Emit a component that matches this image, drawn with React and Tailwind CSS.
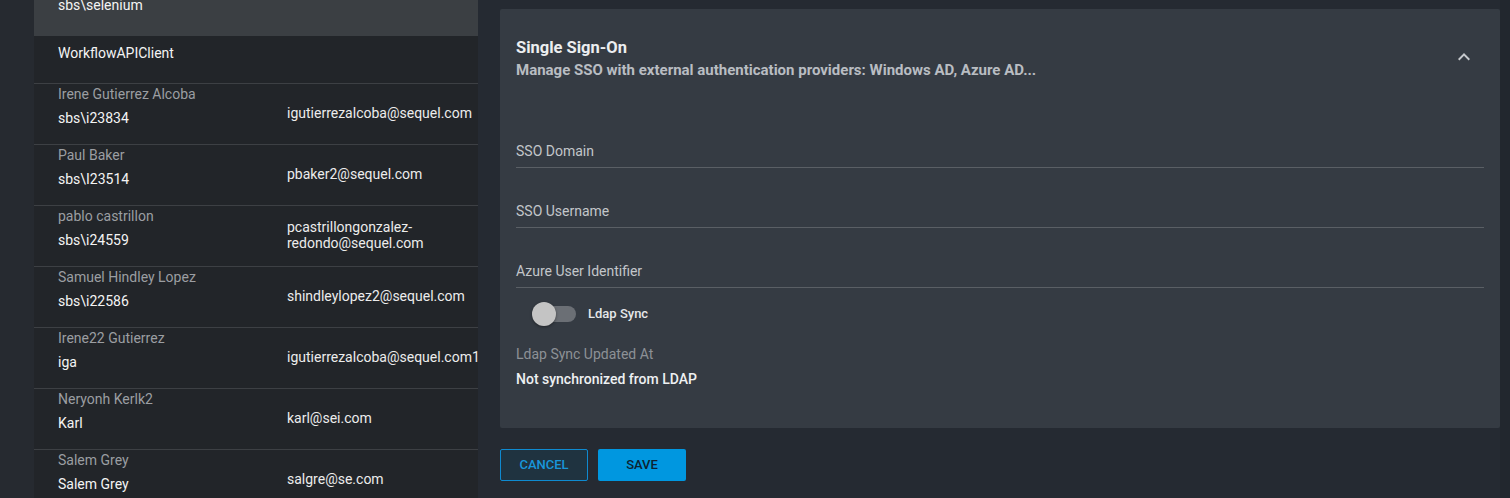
import React from "react";

const rows = [
  { name: "Irene Gutierrez Alcoba", login: "sbs\\i23834", email: "igutierrezalcoba@sequel.com" },
  { name: "Paul Baker", login: "sbs\\I23514", email: "pbaker2@sequel.com" },
  { name: "pablo castrillon", login: "sbs\\i24559", email: "pcastrillongonzalez-redondo@sequel.com" },
  { name: "Samuel Hindley Lopez", login: "sbs\\i22586", email: "shindleylopez2@sequel.com" },
  { name: "Irene22 Gutierrez", login: "iga", email: "igutierrezalcoba@sequel.com1" },
  { name: "Neryonh Kerlk2", login: "Karl", email: "karl@sei.com" },
  { name: "Salem Grey", login: "Salem Grey", email: "salgre@se.com" },
];

function Field({ label, first }) {
  return (
    <div className={`${first ? "mt-[61px]" : "mt-[33px]"} border-b border-[#5a5f65] pb-[6px]`}>
      <div className="text-[14px] leading-5 text-[#c3c6ca]">{label}</div>
    </div>
  );
}

export default function App() {
  return (
    <div
      className="flex h-[498px] w-[1510px] overflow-hidden bg-[#262a30]"
      style={{ fontFamily: "Roboto, 'Noto Sans', sans-serif" }}
    >
      {/* left table */}
      <div className="ml-[34px] w-[444px] shrink-0 overflow-hidden bg-[#222529]">
        <div className="h-[36px] overflow-hidden bg-[#3b3f43] pl-6">
          <div className="-mt-[5px] text-[14px] leading-5 text-[#f4f4f4]">sbs\selenium</div>
        </div>
        <div className="h-[48px] border-b border-[#3d4044] pl-6 pt-[7px]">
          <div className="text-[14px] leading-5 text-[#f4f4f4]">WorkflowAPIClient</div>
        </div>
        {rows.map((r) => (
          <div key={r.name} className="grid h-[61px] grid-cols-[229px_1fr] border-b border-[#3d4044] pl-6">
            <div>
              <div className="whitespace-nowrap text-[14px] leading-5 text-[#9b9ea2]">{r.name}</div>
              <div className="mt-1 whitespace-nowrap text-[14px] leading-5 text-[#f4f4f4]">{r.login}</div>
            </div>
            <div className="flex items-center pb-[2px]">
              <div className="w-[191px] text-[14px] leading-4 text-[#ececec]">{r.email}</div>
            </div>
          </div>
        ))}
      </div>

      {/* right panel */}
      <div className="flex flex-1 bg-[#252a32]">
        <div className="flex flex-1 flex-col pl-[22px] pt-[9px]">
          <div className="relative rounded-[2px] bg-[#353b43] px-4 pb-[39px] pt-[27px]">
            <div className="text-[16.5px] font-bold leading-6 text-[#eceef0]">Single Sign-On</div>
            <div className="text-[15px] font-bold leading-5 text-[#b9bdc2]">
              Manage SSO with external authentication providers: Windows AD, Azure AD...
            </div>
            <svg
              className="absolute right-[24px] top-[36px] h-6 w-6"
              viewBox="0 0 24 24"
              fill="#c6c9cd"
            >
              <path d="M12 8l-6 6 1.41 1.41L12 10.83l4.59 4.58L18 14z" />
            </svg>

            <Field label="SSO Domain" first />
            <Field label="SSO Username" />
            <Field label="Azure User Identifier" />

            <div className="mt-[14px] flex items-center pl-4">
              <div className="relative h-[24px] w-[44px]">
                <div className="absolute left-[4px] top-[4px] h-[16px] w-[40px] rounded-full bg-[#6b6f75]" />
                <div className="absolute left-0 top-0 h-[24px] w-[24px] rounded-full bg-[#c4c4c4] shadow-[0_1px_3px_rgba(0,0,0,0.4)]" />
              </div>
              <div className="ml-3 text-[13px] font-medium leading-5 text-[#e6e7e9]">Ldap Sync</div>
            </div>

            <div className="mt-[18px] text-[14px] leading-5 text-[#8d9196]">Ldap Sync Updated At</div>
            <div className="mt-[5px] text-[14px] font-medium leading-5 text-[#eef0f2]">Not synchronized from LDAP</div>
          </div>

          <div className="mt-[21px] flex gap-[10px]">
            <button className="flex h-[32px] w-[88px] items-center justify-center rounded-[2px] border border-[#0f8ad0] bg-[#1f3340] text-[13px] font-medium uppercase text-[#1896da]">
              Cancel
            </button>
            <button className="flex h-[32px] w-[88px] items-center justify-center rounded-[2px] bg-[#0097e0] text-[13px] font-medium uppercase text-[#0d2331]">
              Save
            </button>
          </div>
        </div>
        <div className="w-[10px] bg-[#22272e]" />
      </div>
    </div>
  );
}
